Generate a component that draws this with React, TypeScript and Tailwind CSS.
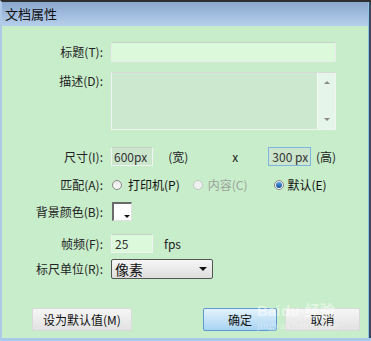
import React from "react";

const font = { fontFamily: '"Noto Sans CJK SC", "Microsoft YaHei", sans-serif' };

function Label({ children }: { children: React.ReactNode }) {
  return (
    <div className="w-[101px] shrink-0 text-right text-[12px] leading-none text-[#222]">{children}</div>
  );
}

function Radio({ checked, disabled }: { checked?: boolean; disabled?: boolean }) {
  return (
    <div
      className={`w-[10px] h-[10px] rounded-full border ${
        disabled ? "border-[#c4c4c4] bg-[#eef2ee]" : "border-[#8a8a8a] bg-gradient-to-b from-[#e6e6e6] to-[#fafafa]"
      } flex items-center justify-center`}
    >
      {checked && <div className="w-[6px] h-[6px] rounded-full bg-gradient-to-b from-[#5aa6e8] to-[#0b4f9c]" />}
    </div>
  );
}

export default function App() {
  return (
    <div className="w-[371px] h-[341px] flex flex-col bg-[#c8edca] border-t-2 border-t-[#2e2e2e] border-l-2 border-l-[#afc9e6] border-b-[3px] border-b-[#a9c9ea] relative overflow-hidden" style={font}>
      <div className="absolute right-0 top-0 bottom-0 w-[3px] flex">
        <div className="w-[1px] bg-[#8cc4ee]" />
        <div className="w-[2px] bg-[#3a4a5a]" />
      </div>
      {/* title bar */}
      <div className="h-[24px] shrink-0 bg-gradient-to-b from-[#8aa7cd] to-[#b6cfec] flex items-center pl-[3px] text-[13px] text-[#111]">
        文档属性
      </div>
      {/* body */}
      <div className="flex flex-col pt-[16px] pr-[35px]">
        {/* 标题 */}
        <div className="flex items-center gap-[8px] h-[20px]">
          <Label>标题(T):</Label>
          <div className="flex-1 h-[20px] bg-[#dcf9dc] border border-[#e8ece8] border-t-[#c9cfc9]" />
        </div>
        {/* 描述 */}
        <div className="flex gap-[8px] mt-[10px]">
          <div className="pt-[3px]">
            <Label>描述(D):</Label>
          </div>
          <div className="flex-1 h-[58px] bg-[#cce8cf] border border-[#eef4ee] border-t-[#d4dcd4] flex">
            <div className="flex-1" />
            <div className="w-[18px] bg-[#e6f5e9] border-l border-[#f4faf4] flex flex-col items-center justify-between py-[8px]">
              <div className="w-0 h-0 border-l-[3px] border-r-[3px] border-b-[3px] border-l-transparent border-r-transparent border-b-[#8a8a8a]" />
              <div className="w-0 h-0 border-l-[3px] border-r-[3px] border-t-[3px] border-l-transparent border-r-transparent border-t-[#8a8a8a]" />
            </div>
          </div>
        </div>
        {/* 尺寸 */}
        <div className="flex items-center gap-[8px] mt-[17px] h-[19px]">
          <Label>尺寸(I):</Label>
          <div className="w-[58px] h-[19px] bg-[#cbe6cd] border border-[#eef4ee] border-t-[#c8d0c8] flex items-center pl-[2px] text-[12px] text-[#333]">600px</div>
          <div className="ml-[7px] text-[12px] text-[#222]">(宽)</div>
          <div className="ml-[36px] text-[12px] text-[#222]">x</div>
          <div className="ml-[22px] w-[58px] h-[19px] bg-[#cbe6cd] border border-[#7eb4e2] flex items-center pl-[3px] text-[12px] text-[#333]">300 px</div>
          <div className="ml-[-3px] text-[12px] text-[#222]">(高)</div>
        </div>
        {/* 匹配 */}
        <div className="flex items-center gap-[8px] mt-[11px] h-[16px]">
          <Label>匹配(A):</Label>
          <div className="flex items-center ml-[1px]">
            <Radio />
            <span className="ml-[6px] text-[12px] text-[#111]">打印机(P)</span>
            <div className="ml-[13px]"><Radio disabled /></div>
            <span className="ml-[5px] text-[12px] text-[#9aa29a]">内容(C)</span>
            <div className="ml-[26px]"><Radio checked /></div>
            <span className="ml-[4px] text-[12px] text-[#111]">默认(E)</span>
          </div>
        </div>
        {/* 背景颜色 */}
        <div className="flex items-center gap-[8px] mt-[9px] h-[19px]">
          <Label>背景颜色(B):</Label>
          <div className="ml-[1px] w-[20px] h-[19px] bg-white border-t-2 border-l-2 border-[#6a6a6a] border-r border-b border-r-[#e0e0e0] border-b-[#e0e0e0] relative">
            <div className="absolute right-[1px] bottom-[2px] w-0 h-0 border-l-[3px] border-r-[3px] border-t-[3px] border-l-transparent border-r-transparent border-t-[#111]" />
          </div>
        </div>
        {/* 帧频 */}
        <div className="flex items-center gap-[8px] mt-[13px] h-[19px]">
          <Label>帧频(F):</Label>
          <div className="w-[42px] h-[19px] bg-[#dcf9dc] border border-[#eef4ee] border-t-[#c8d0c8] flex items-center pl-[3px] text-[12px] text-[#333]">25</div>
          <span className="ml-[3px] text-[12px] text-[#222]">fps</span>
        </div>
        {/* 标尺单位 */}
        <div className="flex items-center gap-[8px] mt-[6px] h-[20px]">
          <Label>标尺单位(R):</Label>
          <div className="w-[102px] h-[20px] rounded-[2px] border border-[#555] bg-gradient-to-b from-[#f6f6f6] to-[#dedede] flex items-center pl-[3px] pr-[5px] justify-between">
            <span className="text-[14px] leading-none text-[#111]">像素</span>
            <div className="w-0 h-0 border-l-[4px] border-r-[4px] border-t-[4px] border-l-transparent border-r-transparent border-t-[#111]" />
          </div>
        </div>
      </div>
      {/* buttons */}
      <div className="flex items-center mt-[29px] h-[23px] pl-[30px]">
        <div className="w-[100px] h-[23px] rounded-[2px] border border-[#d8dcd8] bg-gradient-to-b from-[#f6f6f6] to-[#e2e2e2] flex items-center justify-center text-[12px] text-[#111]">设为默认值(M)</div>
        <div className="ml-[71px] w-[74px] h-[23px] rounded-[2px] border border-[#5d9ad0] bg-gradient-to-b from-[#e4f2fc] to-[#a8d4f2] flex items-center justify-center text-[12px] text-[#111]">确定</div>
        <div className="ml-[8px] w-[75px] h-[23px] rounded-[2px] border border-[#d8dcd8] bg-gradient-to-b from-[#f6f6f6] to-[#e2e2e2] flex items-center justify-center text-[12px] text-[#111]">取消</div>
      </div>
      {/* watermark */}
      <div className="absolute left-[255px] top-[300px] text-[15px] font-bold text-white/50 leading-none pointer-events-none" style={{ fontFamily: '"Liberation Sans", sans-serif' }}>
        Bai<span className="mx-[1px]">du</span> <span style={font}>经验</span>
      </div>
      <div className="absolute left-[255px] top-[318px] text-[11px] text-white/40 leading-none pointer-events-none" style={{ fontFamily: '"Liberation Serif", serif' }}>
        jingyan.baidu.com
      </div>
    </div>
  );
}
